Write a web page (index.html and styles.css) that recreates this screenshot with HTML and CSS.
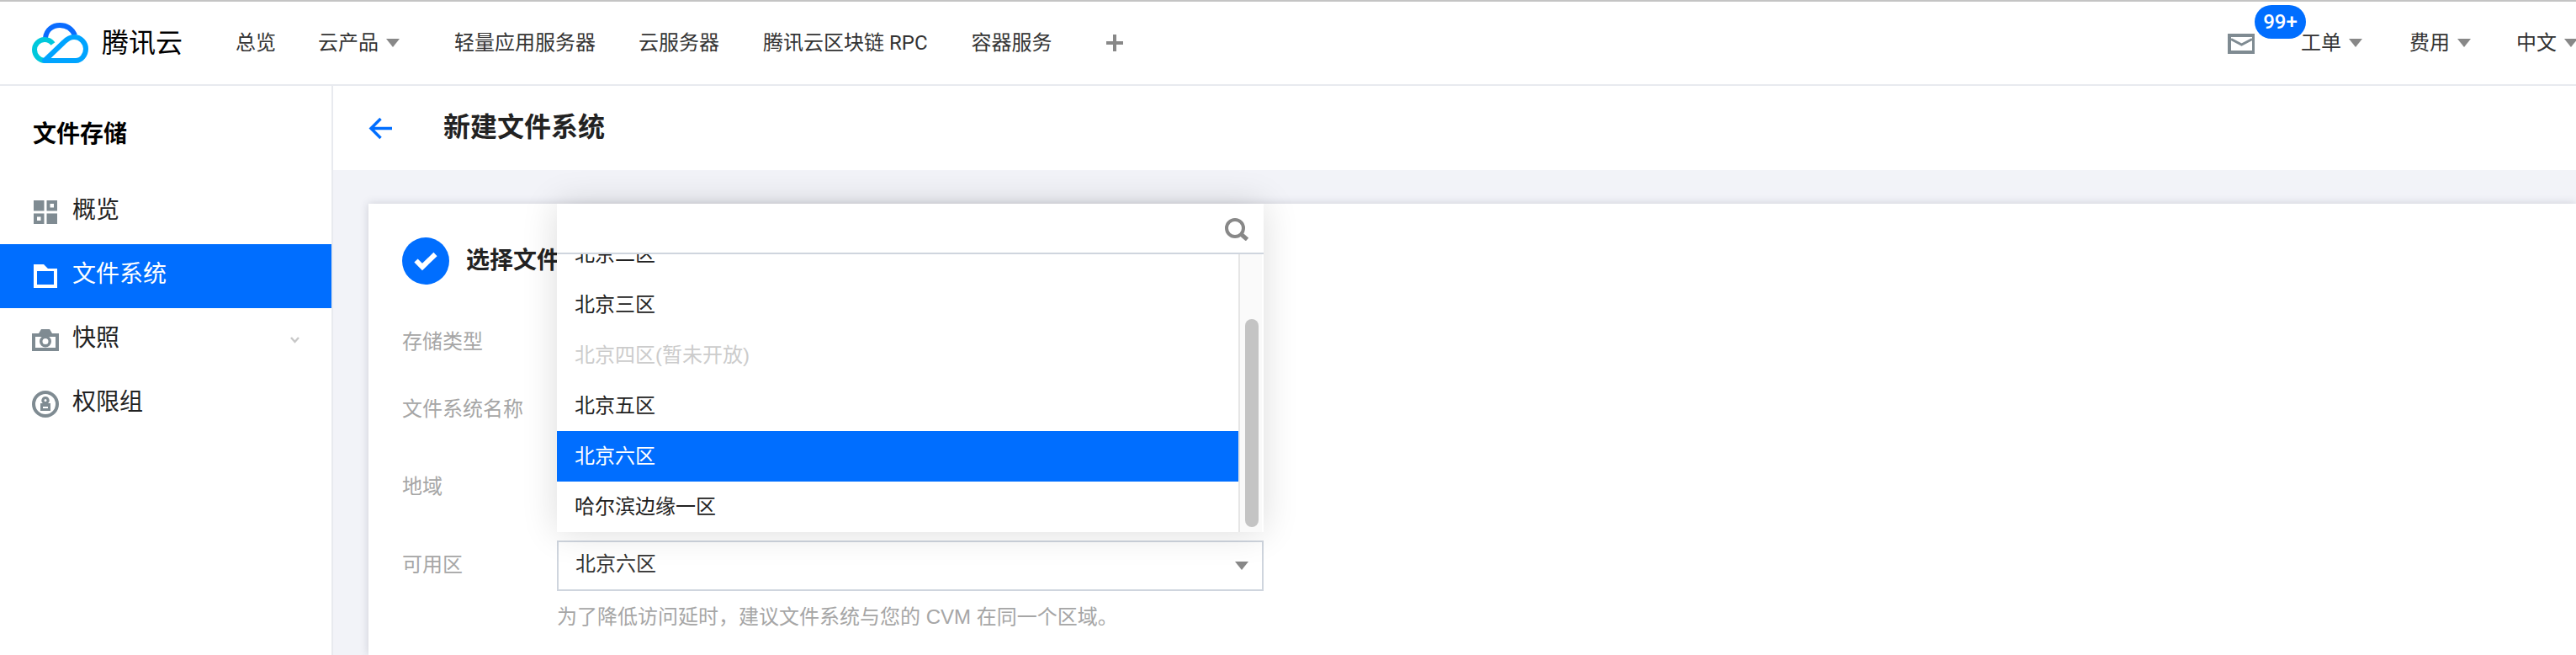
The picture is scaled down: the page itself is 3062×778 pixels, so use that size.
FILE: index.html
```html
<!DOCTYPE html>
<html lang="zh-CN">
<head>
    <meta charset="UTF-8">
    <meta name="viewport" content="width=device-width, initial-scale=1.0">
    <title>腾讯云 - 新建文件系统</title>
    <link rel="stylesheet" href="styles.css">
</head>
<body>

    <header class="top-bar">
        <div class="brand">
            <svg class="brand-logo" viewBox="0 0 67 48" fill="none" stroke-width="6">
                <path d="M16 18C17 8 25 3 33 3C42 3 48 8 51 15" stroke="#0a6cff"/>
                <path d="M25 25C22 21 19 20 15 20C8 20 3 26 3 32C3 39 9 45 15 45H18" stroke="#00c8dc"/>
                <path d="M15 45H52C59 45 64 38 64 31C64 24 58 17 50 17C45 17 42 19 38 23Z" stroke="#00a4ff" stroke-linejoin="round"/>
            </svg>
            <span class="brand-name">腾讯云</span>
        </div>
        <nav class="main-nav">
            <a class="nav-item nav-home">总览</a>
            <a class="nav-item nav-products">云产品<i class="caret"></i></a>
            <a class="nav-item nav-lighthouse">轻量应用服务器</a>
            <a class="nav-item">云服务器</a>
            <a class="nav-item">腾讯云区块链 RPC</a>
            <a class="nav-item">容器服务</a>
            <span class="nav-plus"></span>
        </nav>
        <div class="top-right">
            <span class="mail">
                <svg class="mail-icon" viewBox="0 0 32 24">
                    <rect width="32" height="24" fill="#7f8b92"/>
                    <rect x="4" y="4" width="25" height="16" fill="#fff"/>
                    <path d="M4 6.5L16.500 13L29 6.500" fill="none" stroke="#7f8b92" stroke-width="3"/>
                </svg>
                <span class="badge">99+</span>
            </span>
            <a class="top-link">工单<i class="caret"></i></a>
            <a class="top-link link-fee">费用<i class="caret"></i></a>
            <a class="top-link">中文<i class="caret"></i></a>
        </div>
    </header>

    <div class="layout">
        <aside class="sidebar">
            <h2 class="sidebar-title">文件存储</h2>
            <ul class="side-menu">
                <li class="side-item">
                    <svg class="side-icon" viewBox="0 0 28 28" fill="#7f8b92">
                        <rect width="12.500" height="12.500"/>
                        <path fill-rule="evenodd" d="M15.500 0H28V12.500H15.500ZM19.500 4V8.500H24V4Z"/>
                        <path fill-rule="evenodd" d="M0 15.500H12.500V28H0ZM4 19.500V24H8.500V19.500Z"/>
                        <rect x="15.500" y="15.500" width="12.500" height="12.500"/>
                    </svg>
                    <span class="side-text">概览</span>
                </li>
                <li class="side-item active">
                    <svg class="side-icon" viewBox="0 0 28 28" fill="#fff">
                        <path fill-rule="evenodd" d="M0 0H12L17 5H28V28H0ZM4 8V24H24V8Z"/>
                    </svg>
                    <span class="side-text">文件系统</span>
                </li>
                <li class="side-item">
                    <svg class="side-icon wide" viewBox="0 0 32 26" fill="#7f8b92">
                        <path fill-rule="evenodd" d="M0 5H8L11 0H21L24 5H32V26H0ZM4 9V22H28V9Z"/>
                        <path fill-rule="evenodd" d="M16 7.500A7 7 0 1 1 16 21.500A7 7 0 1 1 16 7.500ZM16 11A3.500 3.500 0 1 0 16 18A3.500 3.500 0 1 0 16 11Z"/>
                    </svg>
                    <span class="side-text">快照</span>
                    <svg class="side-chevron" viewBox="0 0 11 8" fill="none" stroke="#c8c8c8" stroke-width="2.500">
                        <path d="M1 1L5.500 6L10 1"/>
                    </svg>
                </li>
                <li class="side-item">
                    <svg class="side-icon wide" viewBox="0 0 32 32" fill="#7f8b92">
                        <circle cx="16" cy="16" r="14" fill="none" stroke="#7f8b92" stroke-width="4"/>
                        <path fill-rule="evenodd" d="M16 7A4.500 4.500 0 0 1 19 15H22V24H10V15H13A4.500 4.500 0 0 1 16 7ZM16 10A1.500 1.500 0 1 0 16 13A1.500 1.500 0 1 0 16 10ZM13 19V21H19V19Z"/>
                    </svg>
                    <span class="side-text">权限组</span>
                </li>
            </ul>
        </aside>

        <main class="content">
            <div class="page-head">
                <svg class="back-arrow" viewBox="0 0 28 27" fill="none" stroke="#006eff" stroke-width="3.500">
                    <path d="M28 13.500H4M14.500 2L3 13.500L14.500 25"/>
                </svg>
                <h1 class="page-title">新建文件系统</h1>
            </div>

            <section class="card">
                <div class="step-head">
                    <svg class="step-check" viewBox="0 0 56 56">
                        <circle cx="28" cy="28" r="28" fill="#006eff"/>
                        <path d="M16.500 27.500L24 35L39.500 20" fill="none" stroke="#fff" stroke-width="6"/>
                    </svg>
                    <span class="step-title">选择文件</span>
                </div>

                <div class="form-row"><label class="form-label">存储类型</label></div>
                <div class="form-row"><label class="form-label">文件系统名称</label></div>
                <div class="form-row region-row"><label class="form-label">地域</label></div>
                <div class="form-row zone-row">
                    <label class="form-label">可用区</label>
                    <div class="select-box">
                        <span class="select-value">北京六区</span>
                        <i class="caret"></i>
                    </div>
                </div>
                <p class="form-hint">为了降低访问延时，建议文件系统与您的 CVM 在同一个区域。</p>

                <div class="dropdown">
                    <div class="dropdown-search">
                        <svg class="search-icon" viewBox="0 0 28 27" fill="none" stroke="#888">
                            <circle cx="12" cy="12" r="10" stroke-width="4"/>
                            <path d="M18.500 18.500L26.500 25.500" stroke-width="5"/>
                        </svg>
                    </div>
                    <div class="dropdown-body">
                        <div class="option-clip">
                            <ul class="option-list">
                                <li class="option">北京二区</li>
                                <li class="option">北京三区</li>
                                <li class="option disabled">北京四区(暂未开放)</li>
                                <li class="option">北京五区</li>
                                <li class="option selected">北京六区</li>
                                <li class="option">哈尔滨边缘一区</li>
                            </ul>
                        </div>
                        <div class="scroll-track"><div class="scroll-thumb"></div></div>
                    </div>
                </div>
            </section>
        </main>
    </div>

</body>
</html>
```

FILE: styles.css
```css
* {
    box-sizing: border-box;
}

html, body {
    height: 100%;
}

body {
    margin: 0;
    overflow: hidden;
    font-family: "Liberation Sans", "Noto Sans CJK SC", sans-serif;
    font-size: 24px;
    color: #333;
    background-color: #fff;
}

ul {
    list-style: none;
    margin: 0;
    padding: 0;
}

h1, h2, p {
    margin: 0;
}

.caret {
    display: inline-block;
    width: 0;
    height: 0;
    border-top: 10px solid #888;
    border-left: 8px solid transparent;
    border-right: 8px solid transparent;
}

/* top bar */
.top-bar {
    display: flex;
    align-items: center;
    height: 102px;
    padding-left: 38px;
    border-top: 2px solid #c4c4c4;
    border-bottom: 2px solid #e8eaef;
    overflow: hidden;
}

.brand {
    display: flex;
    align-items: center;
}

.brand-logo {
    width: 67px;
    height: 48px;
}

.brand-name {
    margin-left: 16px;
    font-size: 32px;
    line-height: 40px;
    color: #000;
}

.main-nav {
    display: flex;
    align-items: center;
    margin-left: 63px;
    font-family: Roboto, "Noto Sans CJK SC", sans-serif;
}

.nav-item {
    margin-right: 52px;
    line-height: 32px;
    white-space: nowrap;
}

.nav-home {
    margin-right: 50px;
}

.nav-products {
    display: flex;
    align-items: center;
    margin-right: 65px;
}

.nav-products .caret {
    margin-left: 9px;
}

.nav-lighthouse {
    margin-right: 51px;
}

.nav-plus {
    width: 20px;
    height: 20px;
    margin-left: 12px;
    background:
        linear-gradient(#888, #888) center / 20px 4px no-repeat,
        linear-gradient(#888, #888) center / 4px 20px no-repeat;
}

.top-right {
    display: flex;
    align-items: center;
    margin-left: auto;
    margin-right: -2px;
}

.mail {
    position: relative;
    display: flex;
    margin-top: 2px;
    margin-right: 55px;
}

.mail-icon {
    width: 32px;
    height: 24px;
}

.badge {
    position: absolute;
    left: 32px;
    top: -34px;
    width: 61px;
    height: 40px;
    border-radius: 20px;
    background-color: #006eff;
    color: #fff;
    font-family: Roboto, sans-serif;
    font-weight: 500;
    font-size: 24px;
    line-height: 40px;
    text-align: center;
}

.top-link {
    display: flex;
    align-items: center;
    margin-right: 56px;
    line-height: 32px;
}

.link-fee {
    margin-right: 54px;
}

.top-link:last-child {
    margin-right: 0;
}

.top-link .caret {
    margin-left: 9px;
}

/* page layout */
.layout {
    display: flex;
    height: 676px;
}

.sidebar {
    flex: none;
    width: 396px;
    border-right: 2px solid #e8eaef;
}

.sidebar-title {
    padding: 40px 0 0 39px;
    height: 112px;
    font-size: 28px;
    line-height: 36px;
    font-weight: 700;
    color: #000;
}

.side-item {
    display: flex;
    align-items: center;
    height: 76px;
    padding-left: 40px;
    font-size: 28px;
    color: #222;
}

.side-item.active {
    background-color: #006eff;
    color: #fff;
}

.side-text {
    line-height: 36px;
    margin-bottom: 4px;
}

.side-icon {
    width: 28px;
    height: 28px;
    margin-right: 18px;
}

.side-icon.wide {
    width: 32px;
    height: 32px;
    margin-left: -2px;
    margin-right: 16px;
}

.side-chevron {
    width: 11px;
    height: 8px;
    margin-left: auto;
    margin-right: 38px;
}

/* main content */
.content {
    flex: 1;
    min-width: 0;
    background-color: #f2f3f8;
}

.page-head {
    display: flex;
    align-items: center;
    height: 100px;
    padding-left: 42px;
    background-color: #fff;
}

.back-arrow {
    width: 28px;
    height: 27px;
}

.page-title {
    margin-left: 61px;
    margin-bottom: 2px;
    font-size: 32px;
    line-height: 40px;
    font-weight: 700;
    color: #222;
}

.card {
    position: relative;
    height: 536px;
    margin: 40px 0 0 42px;
    padding: 40px 0 0 40px;
    background-color: #fff;
    box-shadow: 0 0 10px rgba(54, 58, 80, 0.2);
}

.step-head {
    display: flex;
    align-items: center;
    margin-bottom: 29px;
}

.step-check {
    width: 56px;
    height: 56px;
}

.step-title {
    margin-left: 20px;
    font-size: 28px;
    font-weight: 700;
    line-height: 36px;
    color: #222;
}

.form-row {
    display: flex;
    align-items: center;
    height: 80px;
}

.region-row {
    height: 104px;
}

.zone-row {
    height: 60px;
    margin-top: 11px;
}

.form-label {
    flex: none;
    width: 184px;
    padding-bottom: 2px;
    line-height: 32px;
    color: #a6a6a6;
}

.select-box {
    display: flex;
    align-items: center;
    justify-content: space-between;
    width: 840px;
    height: 60px;
    padding: 0 16px 0 20px;
    border: 2px solid #cfd5de;
}

.select-value {
    line-height: 32px;
    margin-bottom: 4px;
}

.form-hint {
    margin: 15px 0 0 184px;
    line-height: 32px;
    color: #a6a6a6;
}

/* region dropdown, lies over the form */
.dropdown {
    position: absolute;
    left: 224px;
    top: 0;
    width: 840px;
    height: 390px;
    background-color: #fff;
    box-shadow: 0 0 40px rgba(0, 0, 0, 0.14);
}

.dropdown-search {
    display: flex;
    align-items: center;
    justify-content: flex-end;
    height: 60px;
    padding-right: 18px;
    border-bottom: 2px solid #cfd5de;
}

.search-icon {
    width: 28px;
    height: 27px;
    margin-top: 2px;
}

.dropdown-body {
    display: flex;
    height: 330px;
}

.option-clip {
    flex: 1;
    overflow: hidden;
}

.option-list {
    margin-top: -30px;
}

.option {
    height: 60px;
    padding-left: 21px;
    line-height: 60px;
    color: #222;
}

.option.disabled {
    color: #ccc;
}

.option.selected {
    background-color: #006eff;
    color: #fff;
}

.scroll-track {
    flex: none;
    width: 28px;
    margin-right: 2px;
    padding: 77px 0 0 6px;
    border-left: 2px solid #e6e6e6;
    background-color: #fafafa;
}

.scroll-thumb {
    width: 16px;
    height: 247px;
    border-radius: 8px;
    background-color: #c4c4c4;
}
```
